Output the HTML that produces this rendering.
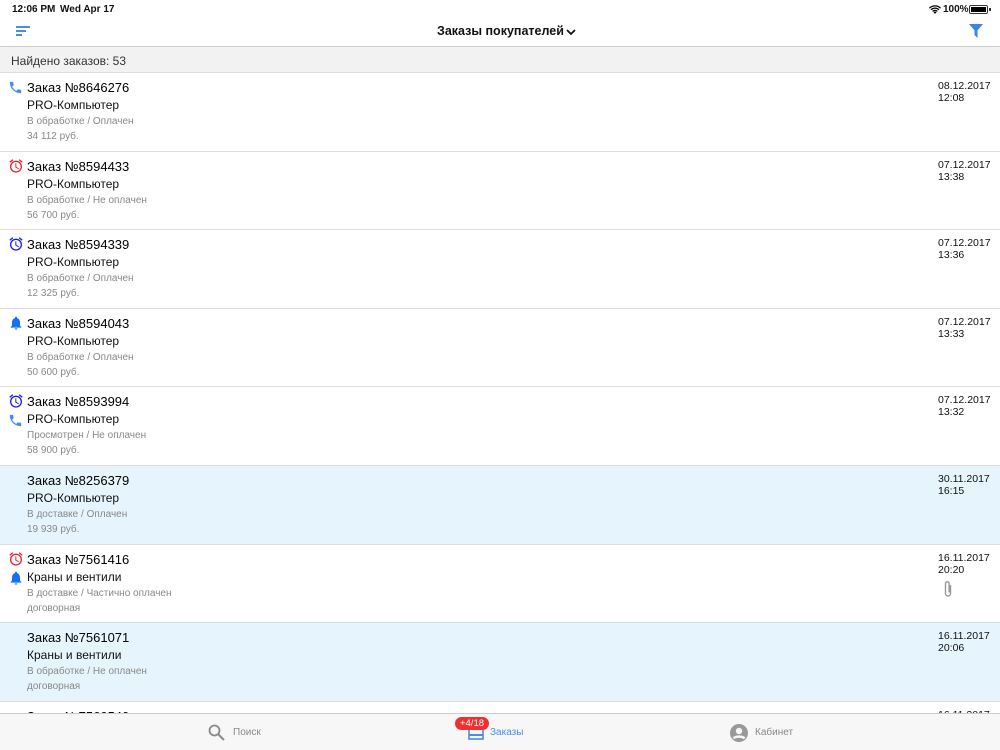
<!DOCTYPE html>
<html style="width:1000px;height:750px;overflow:hidden"><head><meta charset="utf-8">
<style>
*{margin:0;padding:0;box-sizing:border-box}
body{width:1000px;height:750px;overflow:hidden;background:#fff;font-family:"Liberation Sans",Arial,sans-serif;position:relative;color:#111}
.abs{position:absolute}
.status{top:0;left:0;width:1000px;height:20px;font-size:10px;font-weight:bold}
.nav{top:20px;left:0;width:1000px;height:27px;border-bottom:1px solid #ccc}
.found{top:47px;left:0;width:1000px;height:26px;background:#f2f2f2;border-bottom:1px solid #ddd;font-size:12px;color:#333;padding:7px 0 0 11px}
.row{position:absolute;left:0;width:1000px;height:78.6px;border-bottom:1px solid #ddd}
.row.b{background:#e6f5fd}
.t{position:absolute;left:27px;top:7px;font-size:13px;color:#000}
.s{position:absolute;left:27px;top:25px;font-size:12px;color:#111}
.st{position:absolute;left:27px;top:43px;font-size:10px;color:#888}
.p{position:absolute;left:27px;top:58px;font-size:10px;color:#888}
.d{position:absolute;left:938px;top:7px;font-size:10.5px;line-height:12px;color:#111}
.ic{position:absolute;left:8px}
.tab{top:713px;left:0;width:1000px;height:37px;background:#f7f7f7;border-top:1px solid #ccc;font-size:10px;color:#888}
</style></head><body>
<div class="abs status"><span class="abs" style="left:12px;top:4px">12:06 PM</span><span class="abs" style="left:60px;top:4px">Wed Apr 17</span>
<svg class="abs" style="left:929px;top:5px" width="12" height="9" viewBox="0 0 12 9"><path d="M6 9L4.5 7.3a2 2 0 0 1 3 0z M3.2 5.9a4 4 0 0 1 5.6 0l-.9 1a2.8 2.8 0 0 0-3.8 0z M1.6 4.3a6.3 6.3 0 0 1 8.8 0l-.9.9a5 5 0 0 0-7 0z M0 2.7a8.6 8.6 0 0 1 12 0l-.9.9a7.3 7.3 0 0 0-10.2 0z" fill="#000"/></svg>
<span class="abs" style="left:943px;top:4px">100%</span>
<div class="abs" style="left:969px;top:5px;width:19px;height:9px;border:1px solid #333;border-radius:2px;padding:1px"><div style="background:#000;width:100%;height:100%"></div></div>
<div class="abs" style="left:989px;top:8px;width:2px;height:3px;background:#333"></div></div>
<div class="abs nav">
<svg class="abs" style="left:16px;top:6px" width="15" height="10"><rect x="0" y="0" width="14" height="2" fill="#4a8de0"/><rect x="0" y="4" width="10" height="2" fill="#4a8de0"/><rect x="0" y="8" width="6" height="2" fill="#4a8de0"/></svg>
<div class="abs" style="left:437px;top:4px;font-size:12.5px;font-weight:bold">Заказы покупателей</div>
<svg class="abs" style="left:566px;top:9px" width="10" height="7"><path d="M1 1l4 4 4-4" stroke="#111" stroke-width="1.8" fill="none"/></svg>
<svg class="abs" style="left:969px;top:4px" width="14" height="14" viewBox="0 0 14 14"><path d="M0 0h14L8.5 6.5V14L5.5 11V6.5z" fill="#3a86e0"/></svg>
</div>
<div class="abs found">Найдено заказов: 53</div>

<svg width="0" height="0" style="position:absolute"><defs>
<symbol id="ph" viewBox="0 0 24 24"><path d="M6.6 10.8c1.4 2.8 3.8 5.1 6.6 6.6l2.2-2.2c.3-.3.7-.4 1-.2 1.1.4 2.3.6 3.6.6.6 0 1 .4 1 1V20c0 .6-.4 1-1 1C10.6 21 3 13.4 3 4c0-.6.4-1 1-1h3.5c.6 0 1 .4 1 1 0 1.3.2 2.5.6 3.6.1.3 0 .7-.2 1z"/></symbol>
<symbol id="al" viewBox="0 0 24 24"><path d="M22 5.7l-4.6-3.9-1.3 1.5 4.6 3.9zM7.9 3.4L6.6 1.9 2 5.7l1.3 1.5zM12.5 8H11v6l4.7 2.9.8-1.2-4-2.4zM12 4c-5 0-9 4-9 9s4 9 9 9 9-4 9-9-4-9-9-9zm0 16c-3.9 0-7-3.1-7-7s3.1-7 7-7 7 3.1 7 7-3.1 7-7 7z"/></symbol>
<symbol id="bl" viewBox="0 0 24 24"><path d="M12 22c1.1 0 2-.9 2-2h-4c0 1.1.9 2 2 2zm6-6v-5c0-3.1-1.6-5.6-4.5-6.3V4c0-.8-.7-1.5-1.5-1.5s-1.5.7-1.5 1.5v.7C7.6 5.4 6 7.9 6 11v5l-2 2v1h16v-1z"/></symbol>
</defs></svg>

<div class="row" style="top:73px"><svg class="ic" style="top:7px;fill:#4a8de0" width="15" height="15"><use href="#ph"/></svg><div class="t">Заказ №8646276</div><div class="s">PRO-Компьютер</div><div class="st">В обработке / Оплачен</div><div class="p">34 112 руб.</div><div class="d">08.12.2017<br>12:08</div></div>
<div class="row" style="top:151.6px"><svg class="ic" style="top:6px;fill:#e8202a" width="16" height="16"><use href="#al"/></svg><div class="t">Заказ №8594433</div><div class="s">PRO-Компьютер</div><div class="st">В обработке / Не оплачен</div><div class="p">56 700 руб.</div><div class="d">07.12.2017<br>13:38</div></div>
<div class="row" style="top:230.2px"><svg class="ic" style="top:6px;fill:#1a1ae8" width="16" height="16"><use href="#al"/></svg><div class="t">Заказ №8594339</div><div class="s">PRO-Компьютер</div><div class="st">В обработке / Оплачен</div><div class="p">12 325 руб.</div><div class="d">07.12.2017<br>13:36</div></div>
<div class="row" style="top:308.8px"><svg class="ic" style="top:6px;fill:#1a6ef0" width="16" height="16"><use href="#bl"/></svg><div class="t">Заказ №8594043</div><div class="s">PRO-Компьютер</div><div class="st">В обработке / Оплачен</div><div class="p">50 600 руб.</div><div class="d">07.12.2017<br>13:33</div></div>
<div class="row" style="top:387.4px"><svg class="ic" style="top:6px;fill:#1a1ae8" width="16" height="16"><use href="#al"/></svg><svg class="ic" style="top:26px;fill:#4a8de0" width="15" height="15"><use href="#ph"/></svg><div class="t">Заказ №8593994</div><div class="s">PRO-Компьютер</div><div class="st">Просмотрен / Не оплачен</div><div class="p">58 900 руб.</div><div class="d">07.12.2017<br>13:32</div></div>
<div class="row b" style="top:466px"><div class="t">Заказ №8256379</div><div class="s">PRO-Компьютер</div><div class="st">В доставке / Оплачен</div><div class="p">19 939 руб.</div><div class="d">30.11.2017<br>16:15</div></div>
<div class="row" style="top:544.6px"><svg class="ic" style="top:6px;fill:#e8202a" width="16" height="16"><use href="#al"/></svg><svg class="ic" style="top:25px;fill:#1a6ef0" width="16" height="16"><use href="#bl"/></svg><div class="t">Заказ №7561416</div><div class="s">Краны и вентили</div><div class="st">В доставке / Частично оплачен</div><div class="p">договорная</div><div class="d">16.11.2017<br>20:20</div>
<svg class="abs" style="left:942px;top:35px" width="12" height="18" viewBox="0 0 12 18"><path d="M8.5 5v8.5a2.5 2.5 0 0 1-5 0V3.5a1.8 1.8 0 0 1 3.6 0v9" stroke="#999" stroke-width="1.4" fill="none"/></svg></div>
<div class="row b" style="top:623.2px"><div class="t">Заказ №7561071</div><div class="s">Краны и вентили</div><div class="st">В обработке / Не оплачен</div><div class="p">договорная</div><div class="d">16.11.2017<br>20:06</div></div>
<div class="row" style="top:701.8px"><div class="t">Заказ №7560540</div><div class="d">16.11.2017</div></div>

<div class="abs tab">
<svg class="abs" style="left:208px;top:10px" width="17" height="17" viewBox="0 0 17 17"><circle cx="6.5" cy="6.5" r="5" stroke="#888" stroke-width="1.8" fill="none"/><path d="M10.3 10.3L16 16" stroke="#888" stroke-width="2"/></svg>
<span class="abs" style="left:233px;top:13px">Поиск</span>
<svg class="abs" style="left:468px;top:11px" width="16" height="15"><rect x="1" y="1" width="14" height="13" stroke="#4a8de0" stroke-width="1.6" fill="none"/><rect x="1" y="9" width="14" height="2" fill="#4a8de0"/></svg>
<span class="abs" style="left:490px;top:13px;color:#4a8de0">Заказы</span>
<div class="abs" style="left:455px;top:3px;width:34px;height:13px;background:#f03030;border-radius:7px;color:#fff;font-size:9.5px;text-align:center;line-height:13px">+4/18</div>
<svg class="abs" style="left:730px;top:10px" width="18" height="18" viewBox="0 0 18 18"><circle cx="9" cy="9" r="9" fill="#999"/><circle cx="9" cy="7" r="3.2" fill="#f7f7f7"/><path d="M3.5 14.5c1.5-2.5 9.5-2.5 11 0" stroke="#f7f7f7" stroke-width="2.4" fill="none"/></svg>
<span class="abs" style="left:755px;top:13px">Кабинет</span>
</div>
</body></html>
